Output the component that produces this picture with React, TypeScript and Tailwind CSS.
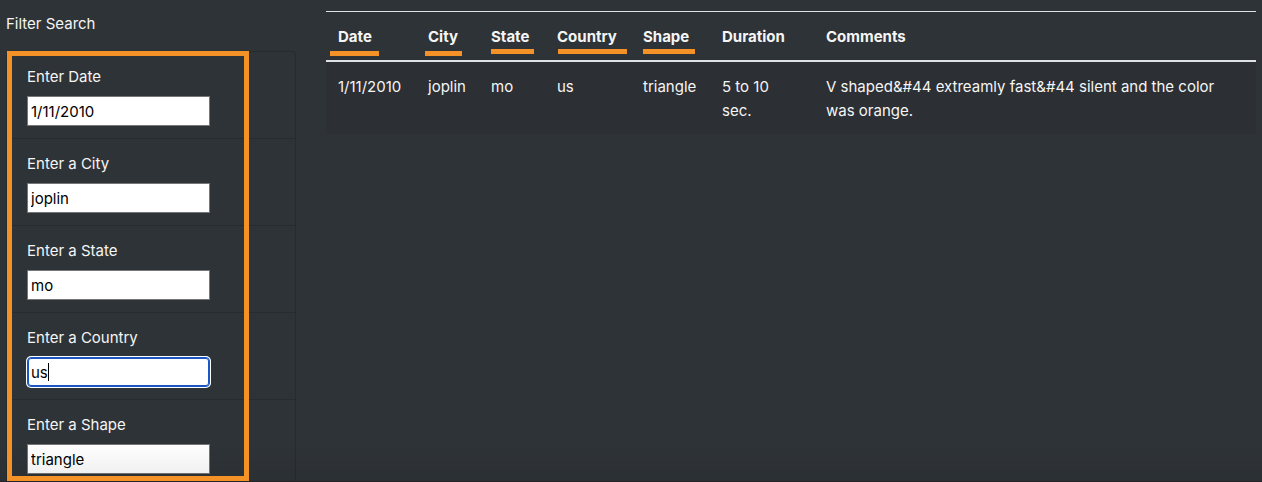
import { useState } from "react";

const fields = [
  { id: "datetime", label: "Enter Date", value: "1/11/2010" },
  { id: "city", label: "Enter a City", value: "joplin" },
  { id: "state", label: "Enter a State", value: "mo" },
  { id: "country", label: "Enter a Country", value: "us" },
  { id: "shape", label: "Enter a Shape", value: "triangle" },
];

const columns = [
  { name: "Date", width: "w-[90px]", mark: "left-1 top-[39px] w-[49px]" },
  { name: "City", width: "w-[63px]", mark: "left-[9px] top-[39px] w-[37px]" },
  { name: "State", width: "w-[66px]", mark: "left-3 top-[37px] w-[43px]" },
  { name: "Country", width: "w-[86px]", mark: "left-[13px] top-[37px] w-[69px]" },
  { name: "Shape", width: "w-[79px]", mark: "left-3 top-[37px] w-[52px]" },
  { name: "Duration", width: "w-[104px]", mark: "" },
  { name: "Comments", width: "", mark: "" },
];

const sightings = [
  [
    "1/11/2010",
    "joplin",
    "mo",
    "us",
    "triangle",
    "5 to 10 sec.",
    "V shaped&#44 extreamly fast&#44 silent and the color was orange.",
  ],
];

function FilterField({ id, label, value }: { id: string; label: string; value: string }) {
  const [text, setText] = useState(value);
  const active = id === "country";
  return (
    <li className="border-b border-[#282b2e] px-5 pb-3 pt-[13px]">
      <label htmlFor={id} className="mb-[7px] block">
        {label}
      </label>
      <div className="relative w-[183px]">
        <input
          id={id}
          type="text"
          value={text}
          onChange={(e) => setText(e.target.value)}
          className={
            "block h-[30px] w-full bg-white px-[3px] text-black outline-none " +
            (active
              ? "rounded-sm border border-[#1b57c4] shadow-[inset_0_0_0_1px_#1b57c4,0_0_0_1px_#ffffff]"
              : "border border-[#767676]")
          }
        />
        {active && <span className="absolute left-[21px] top-[6px] h-[18px] w-px bg-black" />}
      </div>
    </li>
  );
}

export default function App() {
  return (
    <div className="relative flex h-screen items-start gap-[30px] overflow-hidden bg-[#2e3337] px-[6px] pt-[11px] font-['Inter','Liberation_Sans',sans-serif] text-[15px] leading-6 text-[#f5f5f5]">
      <aside className="w-[290px] shrink-0">
        <p className="mb-[15px] pt-px">Filter Search</p>
        <form>
          <ul className="rounded border border-b-0 border-[#282b2e]">
            {fields.map((f) => (
              <FilterField key={f.id} {...f} />
            ))}
          </ul>
        </form>
      </aside>
      <main className="min-w-0 flex-1">
        <table className="w-full table-fixed border-separate border-spacing-0 text-left">
          <thead>
            <tr>
              {columns.map((c) => (
                <th
                  key={c.name}
                  className={"relative border-t border-b-2 border-[#dee2e6] px-3 pb-[11px] pt-[13px] align-bottom font-bold " + c.width}
                >
                  {c.name}
                  {c.mark && <span className={"absolute h-[5px] bg-[#f59227] " + c.mark} />}
                </th>
              ))}
            </tr>
          </thead>
          <tbody>
            {sightings.map((row) => (
              <tr key={row[0]} className="bg-[#2c2f33]">
                {row.map((cell, i) => (
                  <td key={i} className="px-3 pb-[11px] pt-[13px] align-top">
                    {cell}
                  </td>
                ))}
              </tr>
            ))}
          </tbody>
        </table>
      </main>
      <div className="pointer-events-none absolute inset-x-0 bottom-0 h-10 border-b border-[#222427] bg-linear-to-b from-transparent to-black/7" />
      <div className="pointer-events-none absolute bottom-px left-[7px] top-[51px] w-[242px] border-[5px] border-[#f59227]" />
    </div>
  );
}
